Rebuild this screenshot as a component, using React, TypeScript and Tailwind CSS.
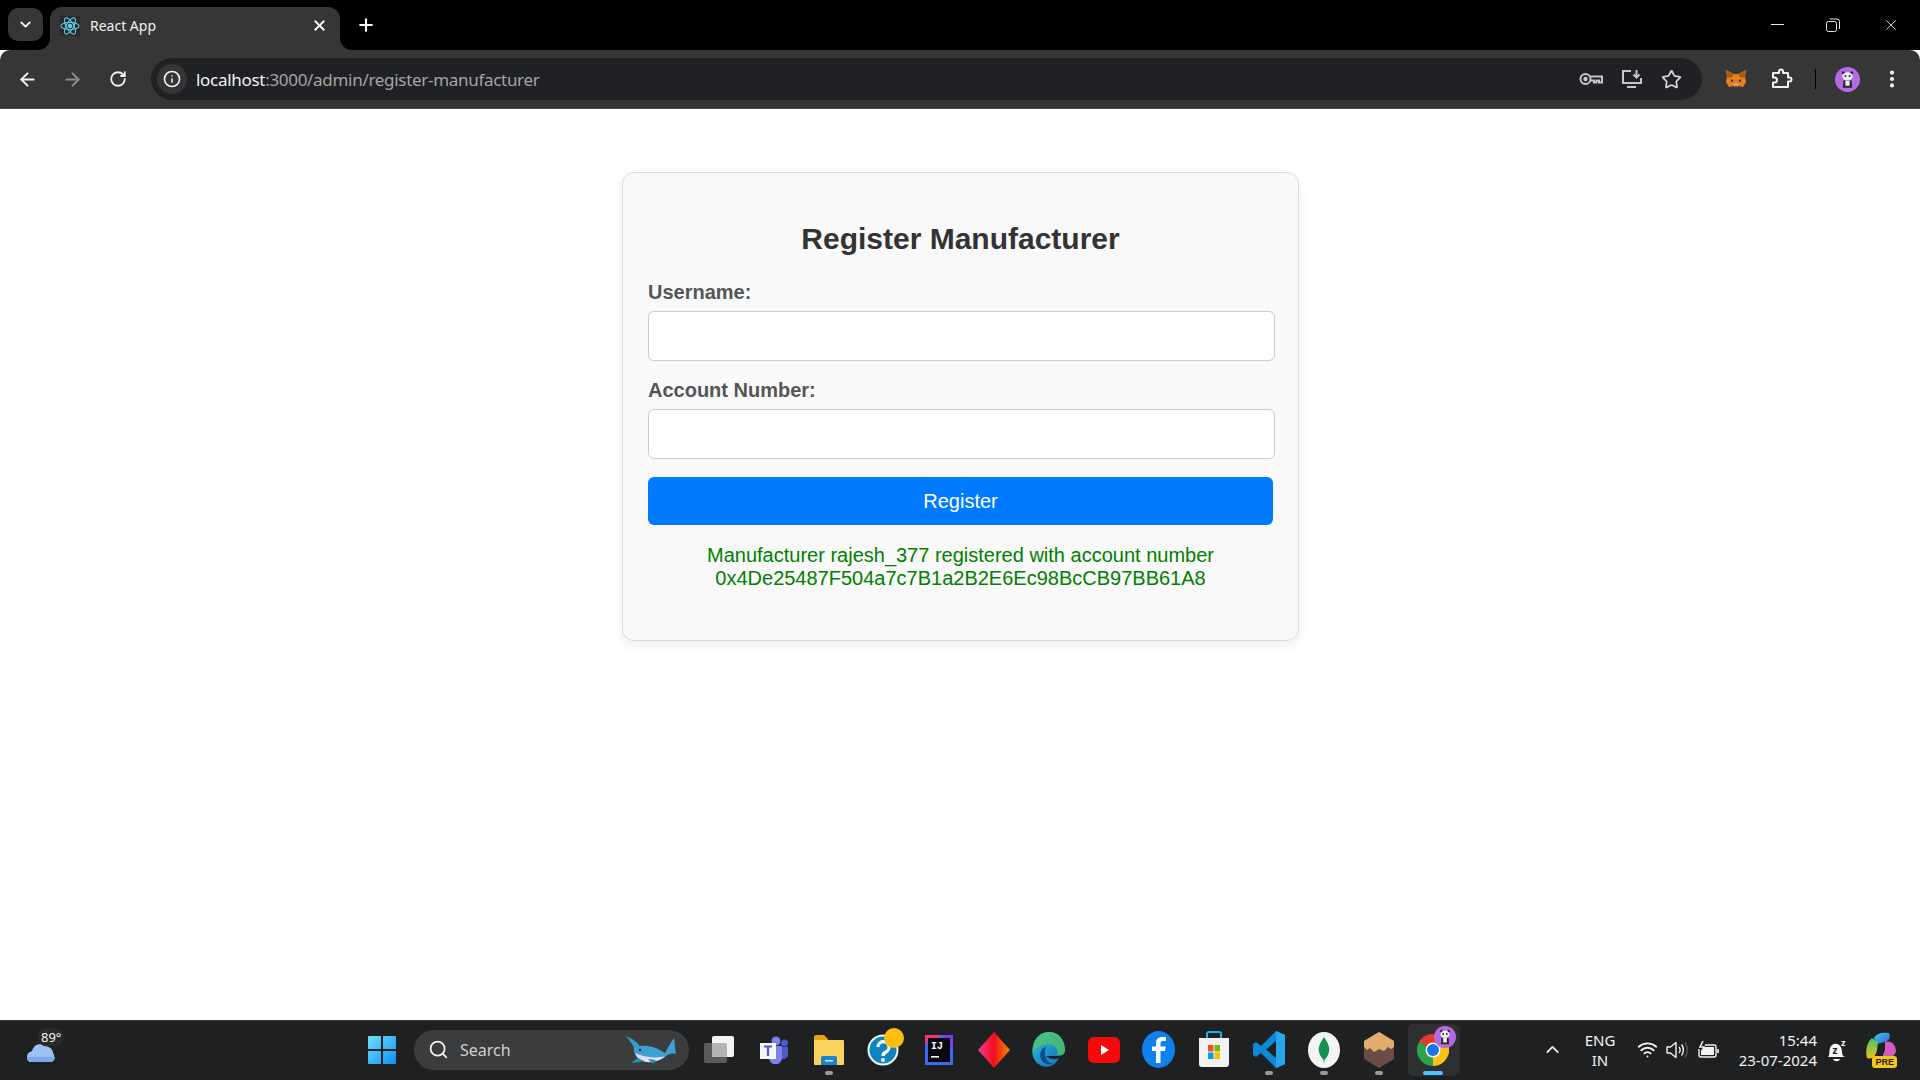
import { ArrowLeft, ArrowRight, ChevronDown, ChevronUp, EllipsisVertical, Info, Plus, RotateCw, Search, Star, Wifi, X } from "lucide-react";

const ReactLogo = () => (
  <svg width="20" height="20" viewBox="0 0 24 24" fill="none" stroke="#61c8e6" strokeWidth="1.3">
    <circle cx="12" cy="12" r="2.2" fill="#61c8e6" />
    <ellipse cx="12" cy="12" rx="11" ry="4.4" />
    <ellipse cx="12" cy="12" rx="11" ry="4.4" transform="rotate(60 12 12)" />
    <ellipse cx="12" cy="12" rx="11" ry="4.4" transform="rotate(120 12 12)" />
  </svg>
);

const KeyIcon = () => (
  <svg width="24" height="16" viewBox="0 0 24 16" fill="none" stroke="#c7c7c7" strokeWidth="2">
    <circle cx="6.5" cy="8" r="5" />
    <circle cx="6.5" cy="8" r="1.2" fill="#c7c7c7" />
    <path d="M11.5 5.5H23V11.5H20V9.5H17.5V11.5H15V9.5H11.5" />
  </svg>
);

const InstallIcon = () => (
  <svg width="22" height="20" viewBox="0 0 22 20" fill="none" stroke="#c7c7c7" strokeWidth="2">
    <path d="M10 2H2V14H20V9" />
    <path d="M6 18H15" />
    <path d="M15.5 1V8M12.5 5.5L15.5 8.5L18.5 5.5" />
  </svg>
);

const FoxIcon = () => (
  <svg width="22" height="20" viewBox="0 0 22 20">
    <path d="M1 1L9 5H13L21 1L20 8L21 13L18 18L13 17H9L4 18L1 13L2 8Z" fill="#e8821e" />
    <path d="M1 1L9 5L6 9L2 8Z" fill="#a85a18" />
    <path d="M21 1L13 5L16 9L20 8Z" fill="#a85a18" />
    <path d="M6 10L9 12L6 13ZM16 10L13 12L16 13Z" fill="#3a2a20" />
    <path d="M9 15H13L12.5 18H9.5Z" fill="#d7c1b3" />
    <path d="M9.5 16.5H12.5L11 18Z" fill="#2a2a2a" />
  </svg>
);

const PuzzleIcon = () => (
  <svg width="22" height="22" viewBox="0 0 22 22" fill="none" stroke="#f1f1f1" strokeWidth="2" strokeLinejoin="round">
    <path d="M2 5H8V3.5A2 2 0 0 1 12 3.5V5H17V9.5H18.5A2 2 0 0 1 18.5 13.5H17V19H2V14.5H3.5A2.5 2.5 0 0 0 3.5 9.5H2Z" />
  </svg>
);

const PandaFace = ({ size }: { size: number }) => (
  <svg width={size} height={size} viewBox="0 0 24 24">
    <circle cx="12" cy="12" r="12" fill="#b36ae2" />
    <circle cx="8" cy="5.5" r="1.5" fill="#2a2a2a" />
    <circle cx="16" cy="5.5" r="1.5" fill="#2a2a2a" />
    <ellipse cx="12" cy="9" rx="5" ry="4" fill="#ececec" />
    <circle cx="10" cy="8.7" r="1" fill="#2a2a2a" />
    <circle cx="14" cy="8.7" r="1" fill="#2a2a2a" />
    <path d="M8 13H16L16.5 20H7.5Z" fill="#2a2a2a" />
    <rect x="10" y="13" width="4" height="5" fill="#ececec" />
  </svg>
);

const WeatherIcon = () => (
  <svg width="38" height="34" viewBox="0 0 38 34">
    <path d="M4 24C4 20 7 19 9 18C11 12 16 9 21 13C26 13 30 16 30 20C32 22 32 29 27 29H9C5 29 4 27 4 24Z" fill="#9cc0f5" />
    <path d="M4 24H32C32 27 30 29 27 29H9C6 29 4 27 4 24Z" fill="#7fa8ea" />
  </svg>
);

const WindowsLogo = () => (
  <svg width="30" height="30" viewBox="0 0 30 30">
    <defs>
      <linearGradient id="win" x1="0" y1="0" x2="1" y2="1">
        <stop offset="0" stopColor="#6fe0fb" />
        <stop offset="1" stopColor="#0f8ff0" />
      </linearGradient>
    </defs>
    <path d="M1 2a1 1 0 0 1 1-1H14V14H1ZM16 1H28a1 1 0 0 1 1 1V14H16ZM1 16H14V29H2a1 1 0 0 1-1-1ZM16 16H29V28a1 1 0 0 1-1 1H16Z" fill="url(#win)" />
  </svg>
);

const WhaleIcon = () => (
  <svg width="50" height="28" viewBox="0 0 50 28">
    <path d="M8 11C17 8 30 10 39 17C42 12 44 7 48 2C49 8 49 13 50 18C46 17 43 18 40 20C33 27 20 28 13 23C9 20 7 15 8 11Z" fill="#3f9fd0" />
    <path d="M9 17C17 21 30 23 39 20C32 27 19 28 13 23C11 21 10 19 9 17Z" fill="#e4dcf4" />
    <path d="M0 0C5 2 10 5 13 9L14 13L8 11Z" fill="#2f9cc4" />
    <path d="M12 22L5 27C9 27 14 26 18 25Z" fill="#2690b8" />
    <path d="M22 23L27 28L30 24Z" fill="#2690b8" />
    <circle cx="14" cy="14" r="1.2" fill="#12303f" />
  </svg>
);

const TaskViewIcon = () => (
  <svg width="32" height="28" viewBox="0 0 32 28">
    <rect x="1" y="7" width="23" height="20" rx="2" fill="#5b5b5b" />
    <rect x="9" y="0" width="22" height="21" rx="2" fill="#f4f4f4" />
    <path d="M9 7H22a2 2 0 0 1 2 2V21H9Z" fill="#b4b4b4" />
  </svg>
);

const TeamsIcon = () => (
  <svg width="30" height="28" viewBox="0 0 30 28">
    <circle cx="17" cy="5" r="4.5" fill="#7b83eb" />
    <circle cx="25.5" cy="7" r="3.5" fill="#5059c9" />
    <path d="M20 11H29V19A5 5 0 0 1 20 21Z" fill="#5059c9" />
    <path d="M10 10H23V22A6.5 6.5 0 0 1 10 22Z" fill="#7b83eb" />
    <rect x="1" y="7" width="16" height="16" fill="#f5f5f5" />
    <path d="M5 10.5H13M9 10.5V20" stroke="#5059c9" strokeWidth="2.2" fill="none" />
  </svg>
);

const FolderIcon = () => (
  <svg width="32" height="32" viewBox="0 0 32 32">
    <path d="M1 3a2 2 0 0 1 2-2H11L15 5V12H1Z" fill="#e3a40f" />
    <path d="M1 6H30a1 1 0 0 1 1 1V30a1 1 0 0 1-1 1H2a1 1 0 0 1-1-1Z" fill="#fcd35e" />
    <path d="M8 24a2 2 0 0 1 2-2H22a2 2 0 0 1 2 2V31H8Z" fill="#1783d1" />
    <rect x="12" y="26" width="8" height="1.5" fill="#cfe7f8" />
  </svg>
);

const HelpIcon = () => (
  <svg width="32" height="32" viewBox="0 0 32 32" className="overflow-visible">
    <circle cx="15" cy="16" r="15.5" fill="#f0f6fa" />
    <circle cx="15" cy="16" r="13.5" fill="#0f85c0" />
    <path d="M10 13a5.5 5.5 0 1 1 8 5c-2 1-3 2-3 4" fill="none" stroke="#ffffff" strokeWidth="3.2" />
    <circle cx="15" cy="26" r="2" fill="#ffffff" />
    <circle cx="26" cy="4" r="10" fill="#fdbf0b" />
  </svg>
);

const IntellijIcon = () => (
  <svg width="28" height="32" viewBox="0 0 28 32">
    <rect x="0" y="1" width="28" height="30" fill="#3b6cf0" />
    <path d="M0 1H16L10 9H0Z" fill="#f0366e" />
    <path d="M28 1V16L18 1Z" fill="#7a3cf0" />
    <rect x="3" y="4" width="22" height="24" fill="#0b0711" />
    <text x="6" y="15" fill="#ffffff" fontSize="10" fontWeight="700" fontFamily="Liberation Mono, monospace">IJ</text>
    <rect x="6" y="22" width="8" height="1.6" fill="#ffffff" />
  </svg>
);

const DiamondIcon = () => (
  <svg width="32" height="36" viewBox="0 0 32 36">
    <defs>
      <linearGradient id="dia" x1="0" y1="0" x2="1" y2="0">
        <stop offset="0" stopColor="#f43a97" />
        <stop offset="0.5" stopColor="#f20e1d" />
        <stop offset="1" stopColor="#f08a00" />
      </linearGradient>
    </defs>
    <path d="M16 0L32 18L16 36L0 18Z" fill="url(#dia)" />
  </svg>
);

const EdgeIcon = () => (
  <svg width="33" height="37" viewBox="0 0 33 37">
    <defs>
      <linearGradient id="edge" x1="0" y1="0" x2="1" y2="1">
        <stop offset="0" stopColor="#35c1e0" />
        <stop offset="1" stopColor="#0b6ab0" />
      </linearGradient>
    </defs>
    <path d="M17 1C27 1 33 9 33 19C33 24 29 25 24 25H14C17 28 23 29 27 27C23 35 15 38 8 34C1 30-1 22 1 15C3 6 9 1 17 1Z" fill="url(#edge)" />
    <path d="M17 1C27 1 33 9 33 19C33 24 29 25 25 24C27 18 22 13 16 13C9 13 3 17 1 22C0 12 7 1 17 1Z" fill="#52c660" opacity="0.75" />
    <path d="M14 16C9 17 7 23 9 28C11 33 17 34 21 33C14 31 11 24 14 16Z" fill="#0b4d8d" />
  </svg>
);

const YoutubeIcon = () => (
  <svg width="32" height="26" viewBox="0 0 32 26">
    <rect x="0" y="0" width="32" height="26" rx="6" fill="#f40a0a" />
    <path d="M13 8L21 13L13 18Z" fill="#ffffff" />
  </svg>
);

const FacebookIcon = () => (
  <svg width="33" height="37" viewBox="0 0 33 37">
    <ellipse cx="16.5" cy="18.5" rx="16.5" ry="18.5" fill="#0f80ee" />
    <path d="M18.5 32V20H23L23.7 15.5H18.5V12.5C18.5 11 19.2 10 21 10H24V6.2C22.8 6 21.5 6 20.3 6C16.5 6 14 8.3 14 12V15.5H10V20H14V32Z" fill="#ffffff" />
  </svg>
);

const StoreIcon = () => (
  <svg width="32" height="37" viewBox="0 0 32 37">
    <path d="M9 9V3a2 2 0 0 1 2-2H21a2 2 0 0 1 2 2V9" fill="none" stroke="#1fb2e6" strokeWidth="2" />
    <path d="M1 7H31V33a3 3 0 0 1-3 3H4a3 3 0 0 1-3-3Z" fill="#f2f2f2" />
    <rect x="10" y="14" width="5.5" height="6.5" fill="#f25022" />
    <rect x="16.5" y="14" width="5.5" height="6.5" fill="#7fba00" />
    <rect x="10" y="21.5" width="5.5" height="6.5" fill="#00a4ef" />
    <rect x="16.5" y="21.5" width="5.5" height="6.5" fill="#ffb900" />
  </svg>
);

const VscodeIcon = () => (
  <svg width="32" height="37" viewBox="0 0 32 37">
    <path d="M23 0L32 4V33L23 37L8 22L3 26L0 24V13L3 11L8 15ZM23 10L13 18.5L23 27Z" fill="#0a8ad6" />
    <path d="M23 0L32 4V33L23 37Z" fill="#27a6ec" />
  </svg>
);

const MongoIcon = () => (
  <svg width="32" height="36" viewBox="0 0 32 36">
    <ellipse cx="16" cy="18" rx="16" ry="18" fill="#f4f4f4" />
    <path d="M16 5C20 11 22 15 21 20C20 24 18 26 16.5 28L16 32L15.5 28C14 26 12 24 11 20C10 15 12 11 16 5Z" fill="#12924f" />
  </svg>
);

const BoxIcon = () => (
  <svg width="30" height="36" viewBox="0 0 30 36">
    <path d="M15 0L30 9V27L15 36L0 27V9Z" fill="#6b4b45" />
    <path d="M15 0L30 9V15L27 17L24 15L20 19L15 17L10 20L6 16L3 18L0 15V9Z" fill="#e2ad6e" />
  </svg>
);

const ChromeIcon = () => (
  <svg width="32" height="32" viewBox="0 0 32 32">
    <path d="M16 16L2.1 8A16 16 0 0 1 29.9 8Z" fill="#e33b2e" />
    <path d="M16 16L29.9 8A16 16 0 0 1 16 32Z" fill="#fbc116" />
    <path d="M16 16L16 32A16 16 0 0 1 2.1 8Z" fill="#2ba24c" />
    <circle cx="16" cy="16" r="7.5" fill="#ffffff" />
    <circle cx="16" cy="16" r="6" fill="#1a73e8" />
  </svg>
);

const VolumeIcon = () => (
  <svg width="22" height="20" viewBox="0 0 22 20" fill="none" stroke="#f2f2f2" strokeWidth="1.4">
    <path d="M1 7H4.5L10 2.5V17.5L4.5 13H1Z" strokeLinejoin="round" />
    <path d="M13 7C14.5 8.5 14.5 11.5 13 13M15.5 4.5C18 7.5 18 12.5 15.5 15.5" />
    <path d="M19 2.5C22 7 22 13 19 17.5" stroke="#5a5a5a" />
  </svg>
);

const BatteryIcon = () => (
  <svg width="22" height="19" viewBox="0 0 22 19" fill="none" stroke="#f2f2f2" strokeWidth="1.4">
    <path d="M8 5H17a2 2 0 0 1 2 2V15a2 2 0 0 1-2 2H4a2 2 0 0 1-2-2V9" />
    <path d="M21 9V13" strokeWidth="1.6" />
    <path d="M6 1L3 7H7L5 11" strokeWidth="1.6" />
    <path d="M8 7H17V15H4V11Z" fill="#f2f2f2" stroke="none" />
  </svg>
);

const BellIcon = () => (
  <svg width="24" height="26" viewBox="0 0 24 26">
    <path d="M3 20C5 18 4 14 5 11C6 8 9 6 12 7C16 8 17 12 17 15C17 18 18 19 20 20Z" fill="#f5f5f5" />
    <path d="M8 22H15C14 25 9 25 8 22Z" fill="#f5f5f5" />
    <text x="7.5" y="17" fontSize="10" fontWeight="700" fill="#202124" fontFamily="Noto Sans, sans-serif">z</text>
    <text x="16" y="9" fontSize="9" fontWeight="700" fill="#f5f5f5" fontFamily="Noto Sans, sans-serif">z</text>
  </svg>
);

const CopilotIcon = () => (
  <div className="relative h-[36px] w-[32px]">
    <svg width="32" height="30" viewBox="0 0 32 30">
      <defs>
        <linearGradient id="cop1" x1="0" y1="0" x2="1" y2="1">
          <stop offset="0" stopColor="#3ec8e8" />
          <stop offset="1" stopColor="#3568d8" />
        </linearGradient>
        <linearGradient id="cop2" x1="0" y1="0" x2="0" y2="1">
          <stop offset="0" stopColor="#45c46a" />
          <stop offset="1" stopColor="#f2c21a" />
        </linearGradient>
      </defs>
      <path d="M9 6C11 1 18 0 24 1C26 5 24 9 20 10L12 12Z" fill="url(#cop1)" />
      <path d="M7 6C2 10 0 18 2 26C7 28 11 24 12 18L13 10Z" fill="url(#cop2)" />
      <path d="M20 10C26 8 31 12 31 20C28 26 22 28 17 26L20 18Z" fill="#d45ac0" />
    </svg>
    <span className="absolute bottom-0 right-0 rounded-[3px] bg-[#f5c518] px-[3px] font-['Liberation_Sans',sans-serif] text-[9px] font-bold leading-[12px] text-[#222]">
      PRE
    </span>
  </div>
);

const pinned = [
  { key: "teams", icon: <TeamsIcon />, open: false },
  { key: "files", icon: <FolderIcon />, open: true },
  { key: "help", icon: <HelpIcon />, open: false },
  { key: "idea", icon: <IntellijIcon />, open: false },
  { key: "diamond", icon: <DiamondIcon />, open: false },
  { key: "edge", icon: <EdgeIcon />, open: false },
  { key: "youtube", icon: <YoutubeIcon />, open: false },
  { key: "facebook", icon: <FacebookIcon />, open: false },
  { key: "store", icon: <StoreIcon />, open: false },
  { key: "vscode", icon: <VscodeIcon />, open: true },
  { key: "mongo", icon: <MongoIcon />, open: true },
  { key: "box", icon: <BoxIcon />, open: true },
];

const App = () => {
  return (
    <div className="flex h-screen w-full flex-col overflow-hidden bg-white font-['Liberation_Sans',Arial,sans-serif]">
      {/* Tab strip */}
      <div className="flex h-[50px] shrink-0 items-start bg-black pl-[8px] font-['Noto_Sans',sans-serif]">
        <div className="mt-[8px] flex h-[33px] w-[35px] items-center justify-center rounded-[10px] bg-[#363636] text-white">
          <ChevronDown size={17} strokeWidth={2.5} />
        </div>
        <div className="relative ml-[7px] mt-[7px] flex h-[43px] w-[290px] items-center rounded-t-[12px] bg-[#363636] pb-[6px] pl-[10px] pr-[12px] text-white">
          <svg width="12" height="12" viewBox="0 0 12 12" className="absolute bottom-0 right-full">
            <path d="M12 0V12H0A12 12 0 0 0 12 0Z" fill="#363636" />
          </svg>
          <svg width="12" height="12" viewBox="0 0 12 12" className="absolute bottom-0 left-full">
            <path d="M0 0V12H12A12 12 0 0 1 0 0Z" fill="#363636" />
          </svg>
          <div className="flex h-[20px] w-[20px] items-center justify-center bg-[#2a2a2a]">
            <ReactLogo />
          </div>
          <span className="ml-[10px] text-[14px] text-[#f1f1f1]">React App</span>
          <X size={17} strokeWidth={2.5} className="ml-auto" />
        </div>
        <Plus size={20} strokeWidth={2.5} className="ml-[16px] mt-[15px] text-white" />
        <div className="ml-auto mt-[15px] flex h-[19px] items-center text-[#e8e8e8]">
          <div className="h-px w-[13px] bg-[#e8e8e8]" />
          <svg width="14" height="14" viewBox="0 0 14 14" fill="none" stroke="#e8e8e8" className="ml-[42px]">
            <rect x="0.5" y="3.5" width="10" height="10" rx="2" />
            <path d="M3.5 1H11A2.5 2.5 0 0 1 13.5 3.5V11" />
          </svg>
          <X size={18} strokeWidth={1.2} className="ml-[42px] mr-[20px]" />
        </div>
      </div>

      {/* Toolbar */}
      <div className="flex h-[59px] shrink-0 items-center rounded-t-[10px] border-b border-[#4a4a4a] bg-[#363636] pl-[17px] pr-[10px] font-['Noto_Sans',sans-serif]">
        <ArrowLeft size={21} strokeWidth={2.2} className="text-[#f1f1f1]" />
        <ArrowRight size={21} strokeWidth={2.2} className="ml-[24px] text-[#8b8b8b]" />
        <RotateCw size={18} strokeWidth={2.4} className="ml-[26px] text-[#f1f1f1]" />
        <div className="ml-[24px] flex h-[42px] w-[1551px] shrink-0 items-center rounded-full bg-[#202124] pl-[6px] pr-[20px]">
          <div className="flex h-[30px] w-[30px] items-center justify-center rounded-full bg-[#363636] text-[#f1f1f1]">
            <Info size={18} strokeWidth={2.2} />
          </div>
          <span className="ml-[9px] mt-[2px] text-[17px] tracking-[-0.3px] text-[#f1f1f1]">
            localhost<span className="text-[#a5a5a5]">:3000/admin/register-manufacturer</span>
          </span>
          <div className="ml-auto flex items-center gap-[18px]">
            <KeyIcon />
            <InstallIcon />
            <Star size={21} strokeWidth={2} className="text-[#d4d4d4]" />
          </div>
        </div>
        <div className="ml-[23px]">
          <FoxIcon />
        </div>
        <div className="ml-[24px]">
          <PuzzleIcon />
        </div>
        <div className="ml-[22px] h-[20px] w-px bg-black" />
        <div className="ml-[19px]">
          <PandaFace size={25} />
        </div>
        <EllipsisVertical size={22} strokeWidth={2.6} className="ml-[21px] text-[#f1f1f1]" />
      </div>

      {/* Page */}
      <div className="flex min-h-0 flex-1 justify-center bg-white pl-px pt-[63px]">
        <div className="h-[469px] w-[677px] rounded-[12px] border border-[#dddddd] bg-[#f9f9f9] px-[25px] pt-[49px] shadow-[0_5px_12px_rgba(0,0,0,0.07)]">
          <h2 className="text-center text-[30px] font-bold leading-[34px] text-[#333333]">Register Manufacturer</h2>
          <label className="mt-[24px] block text-[20px] font-bold leading-[25px] text-[#555555]">Username:</label>
          <input className="mt-[6px] block h-[50px] w-[627px] rounded-[6px] border border-[#cccccc] bg-white" />
          <label className="mt-[17px] block text-[20px] font-bold leading-[25px] text-[#555555]">Account Number:</label>
          <input className="mt-[6px] block h-[50px] w-[627px] rounded-[6px] border border-[#cccccc] bg-white" />
          <button className="mt-[18px] block h-[48px] w-full rounded-[6px] bg-[#007bff] text-[20px] text-white">Register</button>
          <p className="mt-[19px] text-center text-[20px] leading-[23px] text-[#008000]">
            Manufacturer rajesh_377 registered with account number 0x4De25487F504a7c7B1a2B2E6Ec98BcCB97BB61A8
          </p>
        </div>
      </div>

      {/* Taskbar */}
      <div className="flex h-[60px] shrink-0 items-center border-t border-[#3a3a3a] bg-[#1f2022] pb-[2px] font-['Noto_Sans',sans-serif] text-[#f2f2f2]">
        <div className="relative ml-[23px] w-[38px]">
          <WeatherIcon />
          <span className="absolute left-[15px] top-[-5px] rounded-full bg-[#2a2a2a] px-[3px] text-[13px] leading-[18px]">89°</span>
        </div>
        <div className="ml-[306px]">
          <WindowsLogo />
        </div>
        <div className="ml-[17px] flex h-[40px] w-[275px] items-center rounded-full bg-[#3b3c3e] pl-[14px] pr-[13px]">
          <Search size={21} strokeWidth={2} />
          <span className="ml-[11px] text-[16px] text-[#d0d0d0]">Search</span>
          <div className="ml-auto">
            <WhaleIcon />
          </div>
        </div>
        <div className="ml-[14px] flex w-[32px] justify-center">
          <TaskViewIcon />
        </div>
        <div className="ml-[11px] flex">
          {pinned.map((item) => (
            <div key={item.key} className="relative flex h-[52px] w-[55px] items-center justify-center">
              {item.icon}
              {item.open && <div className="absolute bottom-[1px] h-[4px] w-[8px] rounded-full bg-[#9a9a9a]" />}
            </div>
          ))}
          <div className="relative ml-[2px] flex h-[52px] w-[50px] items-center justify-center rounded-[5px] bg-[#2e2f31]">
            <div className="absolute bottom-[1px] left-full top-[1px] w-[2px] rounded-r-[4px] bg-[#2a2b2d]" />
            <ChromeIcon />
            <div className="absolute right-[2px] top-[2px]">
              <PandaFace size={22} />
            </div>
            <div className="absolute bottom-[1px] h-[4px] w-[20px] rounded-full bg-[#4cc2ff]" />
          </div>
        </div>
        <ChevronUp size={21} strokeWidth={2} className="ml-[84px]" />
        <div className="ml-[21px] w-[32px] text-center text-[15px] leading-[20px]">
          ENG
          <br />
          IN
        </div>
        <Wifi size={21} strokeWidth={2.2} className="ml-[21px]" />
        <div className="ml-[8px]">
          <VolumeIcon />
        </div>
        <div className="ml-[9px]">
          <BatteryIcon />
        </div>
        <div className="ml-[8px] w-[90px] text-right text-[15px] leading-[20px]">
          15:44
          <br />
          23-07-2024
        </div>
        <div className="ml-[8px]">
          <BellIcon />
        </div>
        <div className="ml-[16px]">
          <CopilotIcon />
        </div>
      </div>
    </div>
  );
};

export default App;
